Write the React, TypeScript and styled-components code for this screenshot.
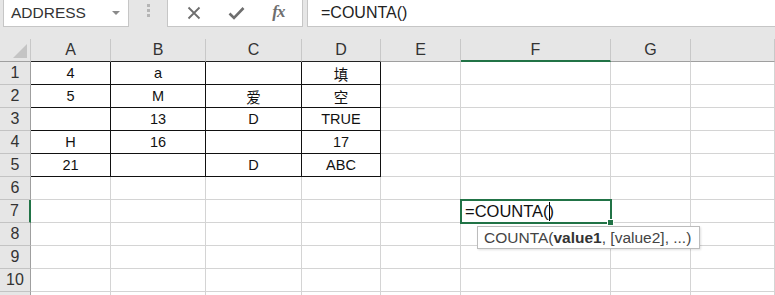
import React from "react";
import styled, { createGlobalStyle } from "styled-components";

const GlobalStyle = createGlobalStyle`
  body {
    margin: 0;
    background: #e6e6e6;
    font-family: "Liberation Sans", "Noto Sans CJK SC", sans-serif;
    overflow: hidden;
  }
`;

const GREEN = "#217346";

const Page = styled.div`
  width: 775px;
  height: 295px;
  position: relative;
  overflow: hidden;
  background: #e6e6e6;
`;

const Toolbar = styled.div`
  display: flex;
  align-items: stretch;
  height: 27px;
  margin-bottom: 12px;
`;

const NameBox = styled.div`
  width: 126px;
  margin-left: 3px;
  background: #fff;
  border: 1px solid #c6c6c6;
  border-top: none;
  box-sizing: border-box;
  display: flex;
  align-items: center;
  justify-content: space-between;
  padding: 0 8px 0 7px;
  font-size: 15.5px;
  color: #333;
`;

const DropArrow = styled.span`
  width: 0;
  height: 0;
  border-left: 4px solid transparent;
  border-right: 4px solid transparent;
  border-top: 4px solid #8a8a8a;
`;

const Grip = styled.div`
  width: 38px;
  display: flex;
  flex-direction: column;
  align-items: center;
  justify-content: center;
  gap: 2px;
  padding-bottom: 6px;
  span {
    width: 3px;
    height: 3px;
    background: #b5b5b5;
  }
`;

const ButtonBox = styled.div`
  width: 136px;
  background: #fff;
  border: 1px solid #c6c6c6;
  border-top: none;
  box-sizing: border-box;
  display: flex;
  align-items: center;
  justify-content: space-around;
  padding: 0 4px 0 6px;
`;

const Fx = styled.span`
  font-family: "Liberation Serif", serif;
  font-style: italic;
  font-weight: bold;
  font-size: 17px;
  color: #6e6e6e;
  letter-spacing: -1px;
  margin-top: -2px;
`;

const FormulaInput = styled.div`
  flex: 1;
  margin-left: 4px;
  background: #fff;
  border: 1px solid #c6c6c6;
  border-top: none;
  border-right: none;
  display: flex;
  align-items: center;
  padding-left: 13px;
  font-size: 16px;
  color: #222;
`;

const Sheet = styled.div`
  display: grid;
  grid-template-columns: 31px 80px 95px 96px 79px 80px 150px 80px 1fr;
  grid-template-rows: 23px repeat(11, 23px);
  background: #fff;
  font-size: 14.5px;
`;

const Corner = styled.div`
  background: #e6e6e6;
  border-right: 1px solid #c8c8c8;
  border-bottom: 1px solid #9f9f9f;
  position: relative;
  &::after {
    content: "";
    position: absolute;
    right: 3px;
    bottom: 3px;
    border-left: 14px solid transparent;
    border-bottom: 14px solid #c4c4c4;
  }
`;

const ColHead = styled.div<{ $selected?: boolean; $dark?: boolean }>`
  background: #e6e6e6;
  border-right: 1px solid #c8c8c8;
  border-bottom: ${(p) =>
    p.$selected ? `2px solid ${GREEN}` : p.$dark ? "1px solid #222" : "1px solid #9f9f9f"};
  display: flex;
  align-items: center;
  justify-content: center;
  color: #333;
  font-size: 16px;
  padding-top: ${(p) => (p.$selected ? "1px" : "0")};
`;

const RowHead = styled.div<{ $selected?: boolean }>`
  background: #e6e6e6;
  border-right: ${(p) => (p.$selected ? `2px solid ${GREEN}` : "1px solid #9f9f9f")};
  border-bottom: 1px solid #c3c3c3;
  display: flex;
  align-items: center;
  justify-content: center;
  color: #333;
  font-size: 16px;
`;

const Cell = styled.div<{ $boxed?: boolean; $active?: boolean }>`
  border-right: 1px solid ${(p) => (p.$boxed ? "#111" : "#d4d4d4")};
  border-bottom: 1px solid ${(p) => (p.$boxed ? "#111" : "#d4d4d4")};
  display: flex;
  align-items: center;
  justify-content: center;
  color: #111;
  white-space: nowrap;
  position: relative;
  ${(p) =>
    p.$active &&
    `
    justify-content: flex-start;
    padding-left: 4px;
    outline: 2px solid ${GREEN};
    outline-offset: -1px;
    z-index: 2;
    font-size: 16.5px;
    &::after {
      content: "";
      position: absolute;
      right: -4px;
      bottom: -4px;
      width: 5px;
      height: 5px;
      background: ${GREEN};
      border: 1px solid #fff;
    }
  `}
`;

const Caret = styled.span`
  display: inline-block;
  width: 1px;
  height: 19px;
  background: #000;
  margin: 0 -1px 0 0;
  vertical-align: middle;
`;

const Tooltip = styled.div`
  position: absolute;
  left: 477px;
  top: 226px;
  width: 223px;
  height: 23px;
  box-sizing: border-box;
  background: #fff;
  border: 1px solid #bcbcbc;
  box-shadow: 1px 1px 2px rgba(0, 0, 0, 0.12);
  display: flex;
  align-items: center;
  padding-left: 6px;
  font-size: 15.5px;
  color: #444;
  z-index: 3;
  white-space: nowrap;
  b {
    color: #333;
  }
`;

const columns = ["A", "B", "C", "D", "E", "F", "G", ""];

const data: string[][] = [
  ["4", "a", "", "填"],
  ["5", "M", "爱", "空"],
  ["", "13", "D", "TRUE"],
  ["H", "16", "", "17"],
  ["21", "", "D", "ABC"],
];

const CloseIcon = () => (
  <svg width="14" height="14" viewBox="0 0 14 14">
    <path d="M1.5 1.5 L12.5 12.5 M12.5 1.5 L1.5 12.5" stroke="#6e6e6e" strokeWidth="1.8" fill="none" />
  </svg>
);

const CheckIcon = () => (
  <svg width="17" height="14" viewBox="0 0 17 14">
    <path d="M1.5 7.5 L6 12 L15.5 2" stroke="#6e6e6e" strokeWidth="2.6" fill="none" />
  </svg>
);

const App = (): React.ReactElement => {
  const rows = Array.from({ length: 11 }, (_, i) => i + 1);
  return (
    <Page>
      <GlobalStyle />
      <Toolbar>
        <NameBox>
          ADDRESS
          <DropArrow />
        </NameBox>
        <Grip>
          <span />
          <span />
          <span />
        </Grip>
        <ButtonBox>
          <CloseIcon />
          <CheckIcon />
          <Fx>fx</Fx>
        </ButtonBox>
        <FormulaInput>=COUNTA()</FormulaInput>
      </Toolbar>
      <Sheet>
        <Corner />
        {columns.map((c, i) => (
          <ColHead key={c + i} $selected={c === "F"} $dark={i < 4}>
            {c}
          </ColHead>
        ))}
        {rows.map((r) => (
          <React.Fragment key={r}>
            <RowHead $selected={r === 7}>{r <= 10 ? r : null}</RowHead>
            {columns.map((c, ci) => {
              const boxed = r <= 5 && ci < 4;
              const active = r === 7 && c === "F";
              return (
                <Cell key={c + ci} $boxed={boxed} $active={active}>
                  {boxed ? data[r - 1][ci] : null}
                  {active && (
                    <>
                      =COUNTA(
                      <Caret />)
                    </>
                  )}
                </Cell>
              );
            })}
          </React.Fragment>
        ))}
      </Sheet>
      <Tooltip>
        COUNTA(<b>value1</b>, [value2], ...)
      </Tooltip>
    </Page>
  );
};

export default App;
